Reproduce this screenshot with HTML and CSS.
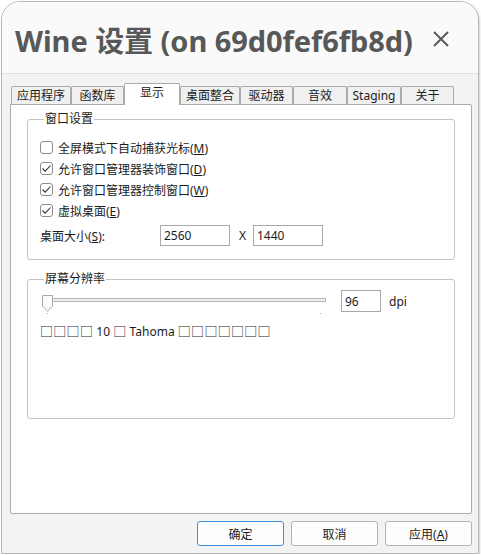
FILE: index.html
```html
<!DOCTYPE html>
<html lang="zh-CN">
<head>
<meta charset="utf-8">
<title>Wine 设置</title>
<link rel="stylesheet" href="styles.css">
</head>
<body>
<div class="window">
  <div class="titlebar">
    <h1 class="title">Wine 设置 (on 69d0fef6fb8d)</h1>
    <button class="close" aria-label="关闭">
      <svg width="18" height="18" viewBox="0 0 18 18"><path d="M2 2 L16 16 M16 2 L2 16" stroke="#5a5a5a" stroke-width="2" fill="none"/></svg>
    </button>
  </div>
  <div class="content">
    <div class="tabs">
      <div class="tab w60">应用程序</div>
      <div class="tab w53">函数库</div>
      <div class="tab active w56">显示</div>
      <div class="tab w60">桌面整合</div>
      <div class="tab w53">驱动器</div>
      <div class="tab w54">音效</div>
      <div class="tab w54">Staging</div>
      <div class="tab w53">关于</div>
    </div>
    <div class="panel">
      <fieldset class="group g1">
        <legend>窗口设置</legend>
        <div class="check"><span class="box"></span><span>全屏模式下自动捕获光标(<u>M</u>)</span></div>
        <div class="check"><span class="box on"><svg width="11" height="11" viewBox="0 0 11 11"><path d="M1.5 5.5 L4.2 8.2 L9.5 2.5" stroke="#333" stroke-width="1.1" fill="none"/></svg></span><span>允许窗口管理器装饰窗口(<u>D</u>)</span></div>
        <div class="check"><span class="box on"><svg width="11" height="11" viewBox="0 0 11 11"><path d="M1.5 5.5 L4.2 8.2 L9.5 2.5" stroke="#333" stroke-width="1.1" fill="none"/></svg></span><span>允许窗口管理器控制窗口(<u>W</u>)</span></div>
        <div class="check"><span class="box on"><svg width="11" height="11" viewBox="0 0 11 11"><path d="M1.5 5.5 L4.2 8.2 L9.5 2.5" stroke="#333" stroke-width="1.1" fill="none"/></svg></span><span>虚拟桌面(<u>E</u>)</span></div>
        <div class="size-row">
          <span class="size-label">桌面大小(<u>S</u>):</span>
          <span class="field w70">2560</span>
          <span class="x">X</span>
          <span class="field w70">1440</span>
        </div>
      </fieldset>
      <fieldset class="group g2">
        <legend>屏幕分辨率</legend>
        <div class="dpi-row">
          <div class="slider">
            <div class="track"></div>
            <svg class="thumb" width="11" height="17" viewBox="0 0 11 17"><path d="M0.5 0.5 H10.5 V11 L5.5 16.3 L0.5 11 Z" fill="#fbfbfb" stroke="#a8a8a8"/></svg>
            <span class="tick t1"></span>
            <span class="tick t2"></span>
          </div>
          <span class="field w40">96</span>
          <span class="dpi">dpi</span>
        </div>
        <div class="sample"><span class="tofu">□□□□</span> 10 <span class="tofu">□</span> Tahoma <span class="tofu">□□□□□□□</span></div>
      </fieldset>
    </div>
    <div class="buttons">
      <button class="btn default">确定</button>
      <button class="btn">取消</button>
      <button class="btn">应用(<u>A</u>)</button>
    </div>
  </div>
</div>
</body>
</html>
```
FILE: styles.css
```css
* { box-sizing: border-box; }
html, body { margin: 0; padding: 0; background: #ffffff; }
body {
  font-family: "Noto Sans", "Noto Sans CJK SC", sans-serif;
  font-size: 12px;
  color: #1c1c1c;
}
.window {
  width: 478px;
  height: 553px;
  margin: 1px 0 0 1px;
  border: 1px solid #b9b9b9;
  border-radius: 19px 19px 0 0;
  background: #f3f3f3;
  display: flex;
  flex-direction: column;
  overflow: hidden;
  box-shadow: 1px 1px 2px rgba(0,0,0,0.18);
}
.titlebar {
  height: 72px;
  flex: none;
  background: #fafafa;
  border-bottom: 1px solid #e0e0e0;
  display: flex;
  align-items: center;
  padding: 3px 0 0 13px;
}
.title {
  margin: 0;
  font-family: "Noto Sans", "Noto Sans CJK SC", sans-serif;
  font-weight: 700;
  font-size: 29px;
  color: #585858;
  letter-spacing: -0.05px;
  white-space: nowrap;
}
.close {
  margin-left: auto;
  margin-right: 28px;
  border: 0;
  background: none;
  padding: 0;
  width: 18px;
  height: 18px;
  display: flex;
}
.content {
  flex: 1;
  display: flex;
  flex-direction: column;
  padding: 9px 6px 7px 8px;
}
.tabs {
  display: flex;
  align-items: flex-start;
  height: 22px;
  margin-bottom: -1px;
  padding-left: 1px;
}
.tab {
  height: 18px;
  margin-top: 3px;
  border: 1px solid #ababab;
  border-bottom: 0;
  border-radius: 2px 2px 0 0;
  background: #f0f0f0;
  display: flex;
  align-items: center;
  justify-content: center;
  line-height: 1;
  padding-top: 1px;
  white-space: nowrap;
}
.tab.active {
  height: 22px;
  margin-top: 0;
  background: #ffffff;
  position: relative;
  z-index: 2;
  padding-top: 0;
  padding-bottom: 3px;
}
.w60 { width: 60px; }
.w53 { width: 53px; }
.w56 { width: 56px; }
.w54 { width: 54px; }
.panel {
  height: 410px;
  background: #ffffff;
  border: 1px solid #ababab;
  border-radius: 0 2px 2px 2px;
  padding: 6px 16px 0 16px;
}
.group {
  margin: 0;
  border: 1px solid #c4c4c4;
  border-radius: 3px;
  padding: 0 12px;
  min-width: 0;
}
.group legend {
  padding: 0 1px;
  margin-left: 4px;
  height: 16px;
  line-height: 16px;
}
.g1 { height: 149px; padding-top: 10px; }
.g2 { height: 148px; margin-top: 11px; padding-top: 3px; }
.check {
  height: 21px;
  display: flex;
  align-items: center;
  gap: 5px;
}
.box {
  width: 13px;
  height: 13px;
  border: 1px solid #8c8c8c;
  border-radius: 3px;
  background: #fff;
  display: flex;
  align-items: center;
  justify-content: center;
  flex: none;
}
.size-row {
  display: flex;
  align-items: center;
  height: 21px;
  margin-top: 4px;
}
.size-label { width: 120px; }
.field {
  height: 21px;
  border: 1px solid #a9a9a9;
  background: #fff;
  padding: 0 3px;
  display: flex;
  align-items: center;
}
.w70 { width: 70px; }
.w40 { width: 40px; }
.x { width: 23px; padding-left: 9px; }
.dpi-row {
  display: flex;
  align-items: center;
  height: 22px;
}
.slider {
  position: relative;
  width: 285px;
  height: 22px;
  margin-left: 1px;
  flex: none;
}
.track {
  position: absolute;
  left: 4px;
  right: 0;
  top: 8px;
  height: 4px;
  border: 1px solid #b4b4b4;
  background: #efefef;
}
.thumb {
  position: absolute;
  left: 1px;
  top: 5px;
}
.tick {
  position: absolute;
  top: 23px;
  width: 1px;
  height: 1px;
  background: #b0b0b0;
}
.t1 { left: 6px; }
.t2 { left: 279px; }
.field.w40 { margin-left: 15px; height: 22px; }
.dpi { margin-left: 8px; }
.sample {
  margin-top: 11px;
  height: 16px;
  line-height: 16px;
  white-space: nowrap;
}
.tofu {
  font-family: "Noto Sans CJK SC", sans-serif;
  font-size: 13px;
  letter-spacing: 0.3px;
}
.buttons {
  display: flex;
  justify-content: flex-end;
  gap: 7px;
  margin-top: 7px;
  padding-right: 0;
}
.btn {
  width: 87px;
  height: 25px;
  border: 1px solid #b3b3b3;
  border-radius: 3px;
  background: #fdfdfd;
  font-family: "Noto Sans", "Noto Sans CJK SC", sans-serif;
  font-size: 12px;
  color: #1c1c1c;
  padding: 0;
}
.btn.default { border-color: #3d8fe0; }
u { text-underline-offset: 1px; }
```
